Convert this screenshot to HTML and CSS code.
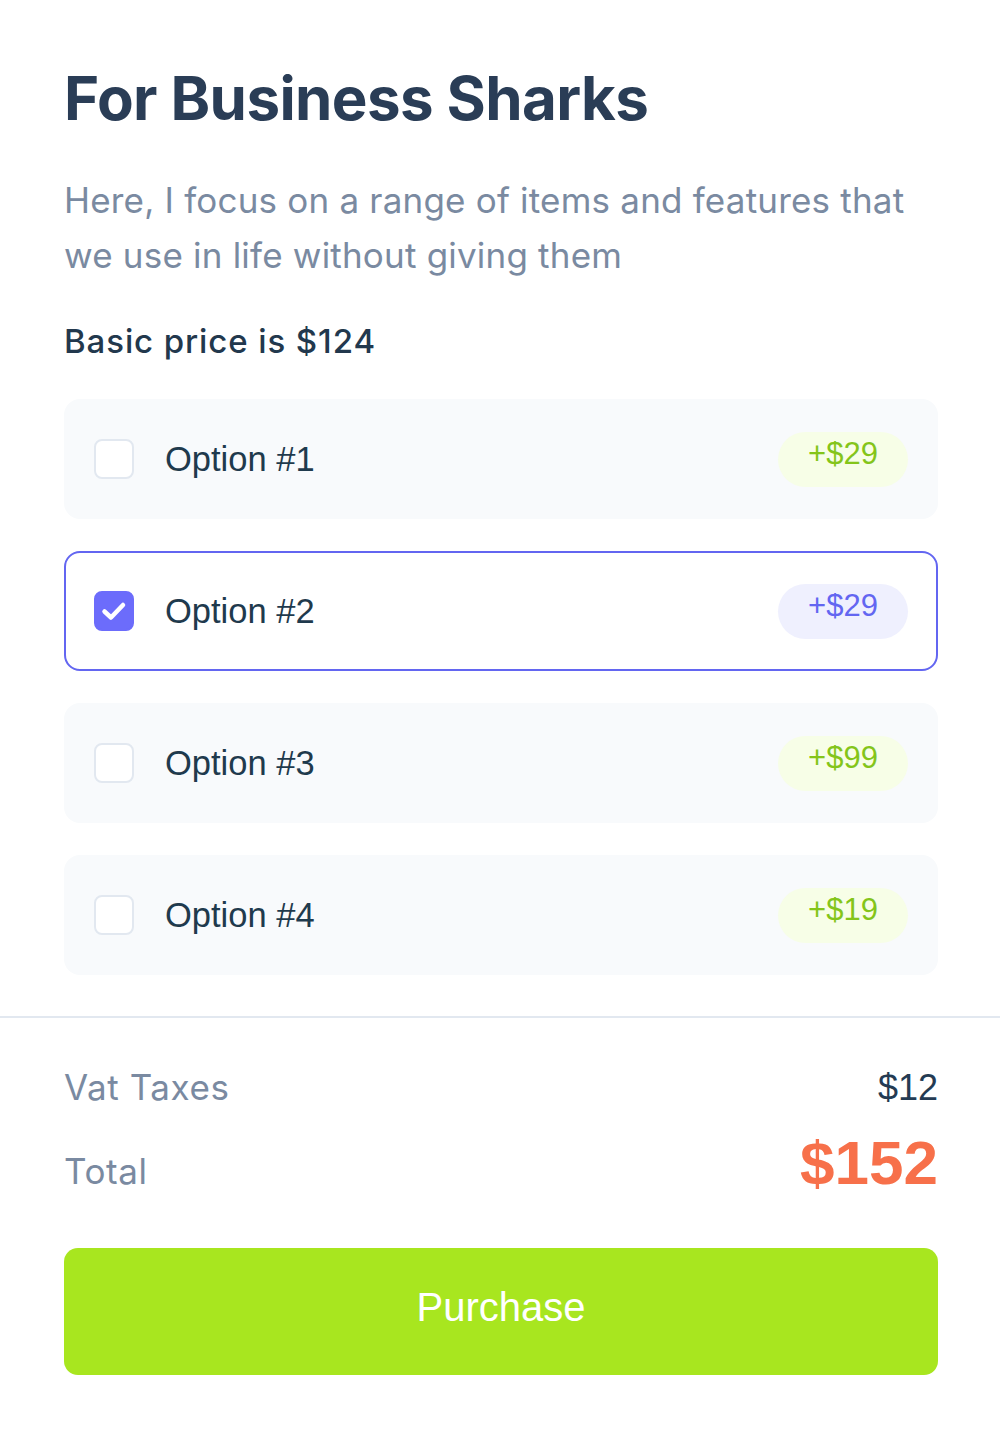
FILE: index.html
```html
<!DOCTYPE html>
<html lang="en">
<head>
<meta charset="utf-8">
<title>For Business Sharks</title>
<link rel="stylesheet" href="styles.css">
</head>
<body>
<div class="card">
  <div class="top">
    <h1 class="title">For Business Sharks</h1>
    <p class="desc">Here, I focus on a range of items and features that we use in life without giving them</p>
    <p class="basic">Basic price is $124</p>
    <div class="options">
      <div class="option">
        <span class="check"></span>
        <span class="label">Option #1</span>
        <span class="badge">+$29</span>
      </div>
      <div class="option selected">
        <span class="check">
          <svg viewBox="0 0 40 40" width="40" height="40"><polyline points="10.5,20.5 17,26.5 29,14" fill="none" stroke="#fff" stroke-width="4.5" stroke-linecap="round" stroke-linejoin="round"/></svg>
        </span>
        <span class="label">Option #2</span>
        <span class="badge">+$29</span>
      </div>
      <div class="option">
        <span class="check"></span>
        <span class="label">Option #3</span>
        <span class="badge">+$99</span>
      </div>
      <div class="option">
        <span class="check"></span>
        <span class="label">Option #4</span>
        <span class="badge">+$19</span>
      </div>
    </div>
  </div>
  <div class="summary">
    <div class="row vat">
      <span class="k">Vat Taxes</span>
      <span class="v">$12</span>
    </div>
    <div class="row total">
      <span class="k">Total</span>
      <span class="v">$152</span>
    </div>
    <button class="buy">Purchase</button>
  </div>
</div>
</body>
</html>
```

FILE: styles.css
```css
* { box-sizing: border-box; }
html, body { margin: 0; padding: 0; background: #fff; }
body { font-family: "Liberation Sans", Arial, sans-serif; }

.card { width: 1000px; }

.top { padding: 62px 62px 0 64px; }

.title {
  margin: 0;
  font-family: Inter, "Noto Sans", sans-serif;
  font-weight: 700;
  font-size: 60px;
  line-height: 72px;
  color: #2a3d56;
  letter-spacing: -0.6px;
}

.desc {
  margin: 39px 0 0;
  font-family: Inter, "Noto Sans", sans-serif;
  font-size: 35px;
  line-height: 55px;
  color: #7a8aa1;
  font-weight: 400;
  letter-spacing: 0.2px;
}

.basic {
  margin: 38px 0 0;
  font-family: Inter, "Noto Sans", sans-serif;
  font-size: 33px;
  line-height: 40px;
  font-weight: 500;
  color: #22384d;
  letter-spacing: 0.9px;
}

.options {
  margin-top: 38px;
  display: flex;
  flex-direction: column;
  gap: 32px;
}

.option {
  height: 120px;
  border-radius: 16px;
  background: #f8fafc;
  border: 2px solid transparent;
  display: flex;
  align-items: center;
  padding: 0 28px;
}

.option.selected {
  background: #fff;
  border-color: #6366f1;
}

.check {
  width: 40px;
  height: 40px;
  border-radius: 8px;
  border: 2px solid #e2e8f0;
  background: #fff;
  flex: none;
  display: flex;
}

.selected .check {
  background: #6c6cfb;
  border-color: #6c6cfb;
}
.selected .check svg { margin: -2px; }

.label {
  margin-left: 31px;
  font-size: 34.5px;
  color: #1f3a4d;
  flex: 1;
}

.badge {
  height: 55px;
  width: 130px;
  border-radius: 28px;
  background: #f7fee7;
  color: #84c51a;
  font-size: 31px;
  text-align: center;
  line-height: 44px;
  padding-bottom: 11px;
}

.selected .badge {
  background: #eff0fe;
  color: #6366f1;
}

.summary {
  margin-top: 41px;
  border-top: 2px solid #e2e8f0;
  padding: 47px 62px 0 64px;
}

.row {
  display: flex;
  justify-content: space-between;
  align-items: baseline;
}

.row .k {
  font-family: Inter, "Noto Sans", sans-serif;
  font-size: 35px;
  color: #7a8aa1;
  letter-spacing: 0.6px;
}

.vat { line-height: 44px; }
.vat .v { font-size: 36px; color: #243b53; }

.total { margin-top: 18px; line-height: 70px; }
.total .v {
  font-size: 62px;
  font-weight: 700;
  color: #f7704a;
}

.buy {
  display: block;
  width: 100%;
  height: 127px;
  margin-top: 42px;
  border: 0;
  border-radius: 14px;
  background: #a8e61f;
  color: #fff;
  font-family: "Liberation Sans", Arial, sans-serif;
  font-size: 40px;
  padding: 0 0 8px;
  cursor: pointer;
}
```
